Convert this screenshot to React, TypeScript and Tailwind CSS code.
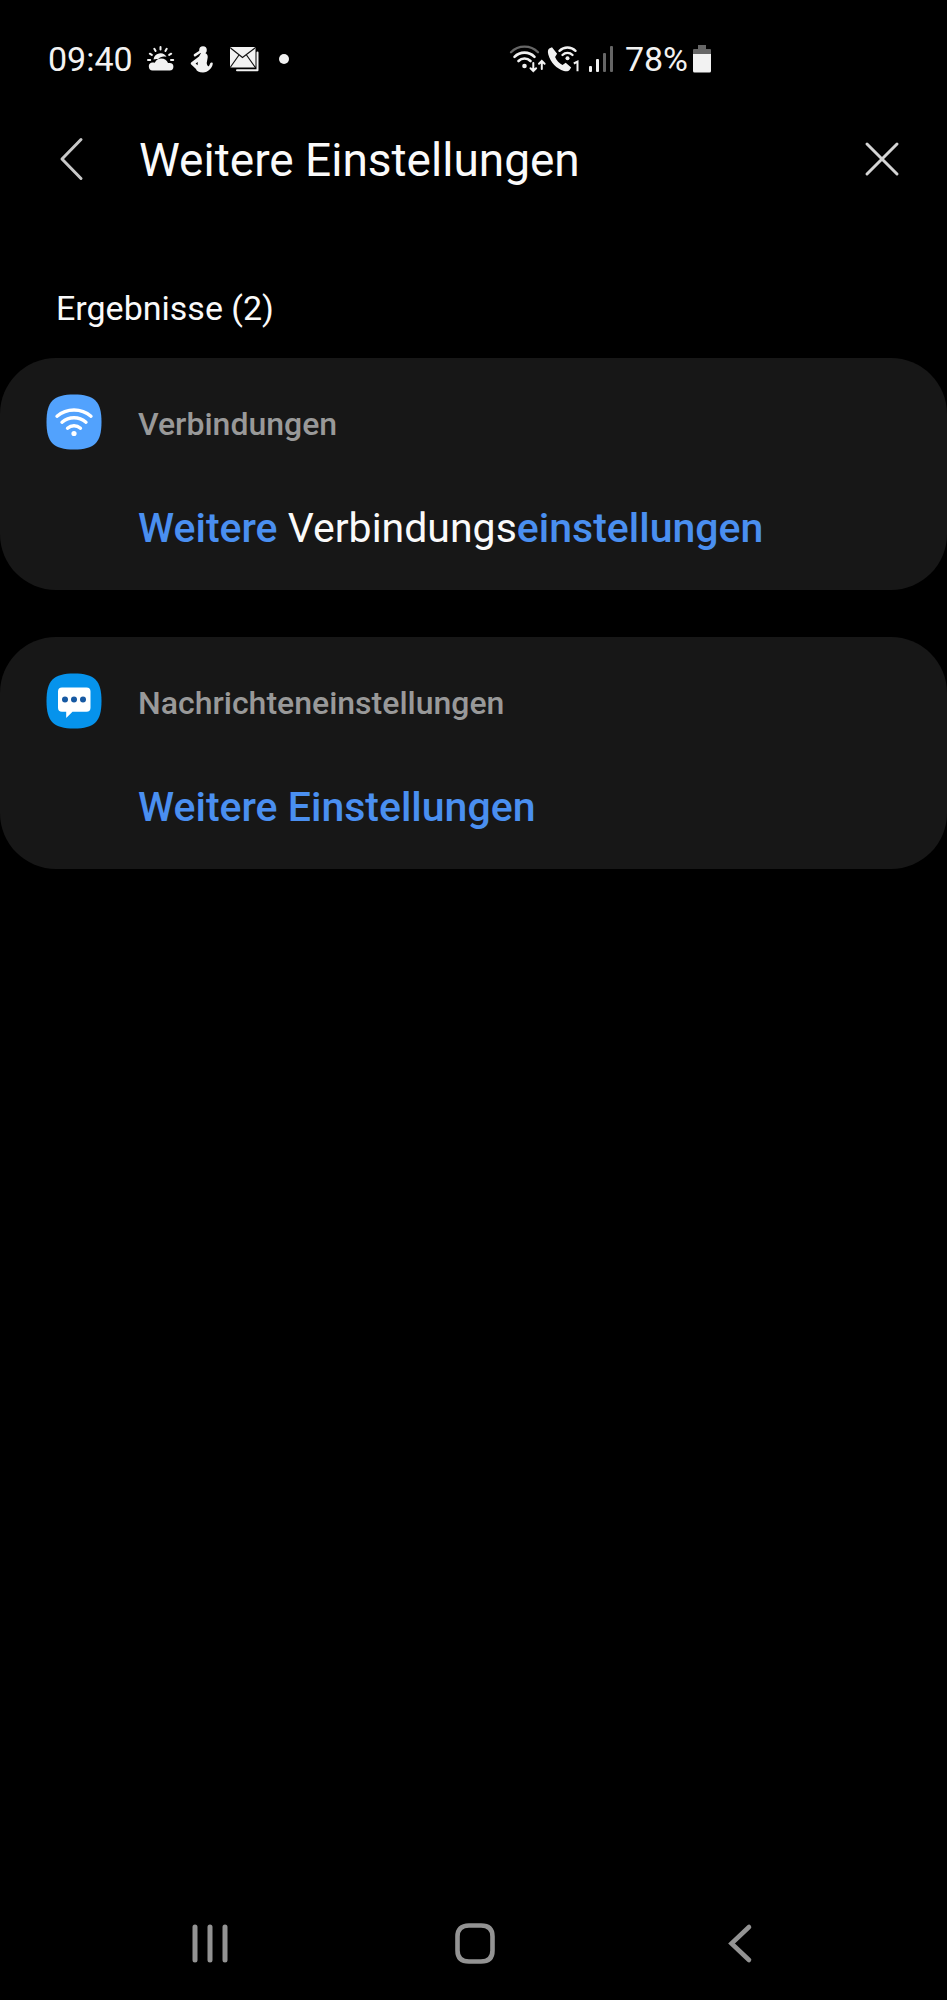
import { ReactNode, useState } from "react";

interface ResultCardProps {
    icon: ReactNode;
    category: string;
    children: ReactNode;
}

function WeatherIcon() {
    return (
        <svg width="28" height="28" viewBox="0 0 28 28" fill="none">
            <path d="M6.5 14.5a7 7 0 0 1 13-2.6c-3-1-6.300-.3-8.500 2.300-1.500-.3-3 0-4.500.3z" fill="#f2f2f2" />
            <path d="M5.500 25.500a4 4 0 0 1-.5-7.900c1-.2 2-.1 2.800.2 1.400-3 3.700-4.300 6.400-4.300 3.300 0 5.900 1.900 6.800 4.600h1.700a3.700 3.700 0 0 1 0 7.400z" fill="#f2f2f2" />
            <path d="M13.500 2v2.500M7.300 3.800l1.300 2.200M19.700 3.800l-1.300 2.200M2.800 8.700l2 1.200M24.200 8.700l-2 1.200M1 15h2.200M24 15h2.200" stroke="#f2f2f2" strokeWidth="2" strokeLinecap="round" />
        </svg>
    );
}

function FitnessIcon() {
    return (
        <svg width="26" height="28" viewBox="0 0 26 28" fill="none">
            <circle cx="14" cy="5" r="3.800" fill="#f2f2f2" />
            <path d="M11.500 6.500 6 10.200" stroke="#f2f2f2" strokeWidth="2.600" strokeLinecap="round" />
            <path d="M12 8h4.200c1.800.8 2.800 2.500 2.500 4.500l-1 5.500c.2 2 1.200 3.600 2.200 3.200l1.500-3.200c.6-1 2.600-.6 2.400.6-.4 4.400-4.700 8.900-9.800 8.900-4 0-6.500-1.500-7-3.500l-4.800-4.500c-.7-.8-.6-1.600.2-2.300L10 11.500zM8.800 17l-2.200 1.600 2 1.600z" fill="#f2f2f2" fillRule="evenodd" />
        </svg>
    );
}

function MailIcon() {
    return (
        <svg width="32" height="28" viewBox="0 0 32 28" fill="none">
            <path d="M28.500 7.500v17.800H8" stroke="#f2f2f2" strokeWidth="2" strokeLinecap="round" strokeLinejoin="round" />
            <rect x="1" y="2" width="25.500" height="20.500" rx="1.500" fill="#f2f2f2" />
            <path d="m1.500 3 12 9.500L26 3M1.500 22l8.500-12M26 22l-8.500-12" stroke="#111" strokeWidth="1.200" />
        </svg>
    );
}

function WifiStatusIcon() {
    return (
        <svg width="38" height="30" viewBox="0 0 38 30" fill="none" strokeLinecap="round">
            <path d="M2 8.200a19 19 0 0 1 27 0" stroke="#666" strokeWidth="2.300" />
            <path d="M5.500 12.800a14 14 0 0 1 20 0M9.500 17a8.500 8.500 0 0 1 12 0" stroke="#f2f2f2" strokeWidth="2.600" />
            <circle cx="15.500" cy="22" r="2.300" fill="#f2f2f2" />
            <path d="M24.300 19v8m-2.800-2.800 2.800 2.800 2.800-2.800M32.800 25v-8M30 19.800l2.800-2.800 2.800 2.800" stroke="#f2f2f2" strokeWidth="2" />
        </svg>
    );
}

function WifiCallIcon() {
    return (
        <svg width="34" height="30" viewBox="0 0 34 30" fill="none" strokeLinecap="round">
            <path d="M5 3.200 2.200 4.600C.8 5.600.6 8 1.300 10.500 3.700 18.500 9.500 24.700 17 27c2.300.7 4.600.3 5.700-1.200l1.500-2.300-5.500-4.800-3.200 2.200c-3.300-1.500-6-4.500-7.400-8l2-3.200z" fill="#f2f2f2" />
            <path d="M12.500 6.800a11.500 11.500 0 0 1 16 0M15.500 11a7 7 0 0 1 10 0" stroke="#f2f2f2" strokeWidth="2.400" />
            <circle cx="20.500" cy="14.200" r="2" fill="#f2f2f2" />
            <path d="m26.800 19.500 3.700-1.800v9.600" stroke="#f2f2f2" strokeWidth="2" strokeLinecap="butt" />
        </svg>
    );
}

function SignalIcon() {
    return (
        <svg width="26" height="30" viewBox="0 0 26 30">
            <rect x="0" y="22" width="3" height="6" rx="1" fill="#f2f2f2" />
            <rect x="7" y="15" width="3" height="13" rx="1" fill="#f2f2f2" />
            <rect x="14" y="9" width="3" height="19" rx="1" fill="#666" />
            <rect x="21" y="2" width="3" height="26" rx="1" fill="#666" />
        </svg>
    );
}

function BatteryIcon() {
    return (
        <svg width="20" height="30" viewBox="0 0 20 30">
            <path d="M6 1h8v4h4a1 1 0 0 1 1 1v4H1V6a1 1 0 0 1 1-1h4z" fill="#666" />
            <path d="M1 10h18v17a1.500 1.500 0 0 1-1.500 1.500h-15A1.500 1.500 0 0 1 1 27z" fill="#f2f2f2" />
        </svg>
    );
}

function ConnectionsIcon() {
    return (
        <svg width="56" height="56" viewBox="0 0 56 56" fill="none" strokeLinecap="round">
            <path d="M28 .5C48.500.5 55.500 7.500 55.500 28S48.500 55.500 28 55.500.5 48.500.5 28 7.500.5 28 .5z" fill="#52a2fd" />
            <path d="M11 22.200c9.800-8.300 24.200-8.300 34 0M16 28.200c7-6 17-6 24 0M21.500 34.200c3.800-3.300 9.200-3.300 13 0" stroke="#fff" strokeWidth="3.400" />
            <circle cx="28" cy="39.500" r="2.600" fill="#fff" />
        </svg>
    );
}

function MessagesIcon() {
    return (
        <svg width="56" height="56" viewBox="0 0 56 56">
            <path d="M28 .5C48.500.5 55.500 7.500 55.500 28S48.500 55.500 28 55.500.5 48.500.5 28 7.500.5 28 .5z" fill="#0693ec" />
            <path d="M16 14.500h24.500a4 4 0 0 1 4 4v16.300a4 4 0 0 1-4 4H26.500l-6.300 6.200v-6.200H16a4 4 0 0 1-4-4V18.500a4 4 0 0 1 4-4z" fill="#fff" />
            <g fill="#1659a3">
                <circle cx="19" cy="26.500" r="3" />
                <circle cx="28" cy="26.500" r="3" />
                <circle cx="37" cy="26.500" r="3" />
            </g>
        </svg>
    );
}

function StatusBar() {
    return (
        <div className="flex h-[118px] items-center justify-between pl-12 pr-[235px] text-[34px] leading-10 text-[#f2f2f2]">
            <div className="flex items-center">
                <span>09:40</span>
                <div className="ml-3.5 flex items-center gap-3.5">
                    <WeatherIcon />
                    <FitnessIcon />
                    <MailIcon />
                    <span className="ml-1 size-2.5 rounded-full bg-[#f2f2f2]" />
                </div>
            </div>
            <div className="flex items-center">
                <WifiStatusIcon />
                <WifiCallIcon />
                <span className="ml-2"><SignalIcon /></span>
                <span className="ml-2.5 mr-1">78%</span>
                <BatteryIcon />
            </div>
        </div>
    );
}

function SearchHeader() {
    const [query, setQuery] = useState("Weitere Einstellungen");

    return (
        <header className="flex h-[82px] items-center pl-12 pr-[41px]">
            <button aria-label="Zurück" className="flex size-12 shrink-0 items-center justify-center">
                <svg width="26" height="48" viewBox="0 0 26 48" fill="none">
                    <path d="M22 4.500 3 24 22 43.500" stroke="#c8c8c8" strokeWidth="3" strokeLinecap="round" strokeLinejoin="round" />
                </svg>
            </button>
            <input
                type="text"
                aria-label="Einstellungen durchsuchen"
                value={query}
                onChange={(e) => setQuery(e.target.value)}
                className="ml-[43px] h-16 min-w-0 flex-1 bg-transparent pt-0.5 text-[46px] text-[#fafafa] outline-none"
            />
            <button aria-label="Suche löschen" onClick={() => setQuery("")} className="flex size-12 shrink-0 items-center justify-center">
                <svg width="36" height="36" viewBox="0 0 36 36" fill="none">
                    <path d="m3 3 30 30M33 3 3 33" stroke="#d4d4d4" strokeWidth="3" strokeLinecap="round" />
                </svg>
            </button>
        </header>
    );
}

function ResultCard({ icon, category, children }: ResultCardProps) {
    return (
        <section className="rounded-[56px] bg-[#171717] px-[46px] pb-[30px] pt-9">
            <div className="flex h-14 items-center gap-9">
                {icon}
                <h2 className="pt-1 text-[32px] font-medium leading-10 text-[#999]">{category}</h2>
            </div>
            <a href="#" className="ml-[92px] mt-[46px] block text-[41px] leading-[64px] text-[#fafafa]">
                {children}
            </a>
        </section>
    );
}

function NavigationBar() {
    return (
        <nav className="mt-auto grid h-28 grid-cols-3 place-items-center pl-[77px] pr-[75px]">
            <button aria-label="Letzte Apps">
                <svg width="48" height="48" viewBox="0 0 48 48" stroke="#939393" strokeWidth="5" strokeLinecap="round">
                    <path d="M9 7v33M24 7v33M39 7v33" />
                </svg>
            </button>
            <button aria-label="Startseite">
                <svg width="48" height="48" viewBox="0 0 48 48" fill="none">
                    <path d="M18 5.500h12c8 0 11.500 4 11.500 11v14c0 7-3.500 11-11.500 11H18c-8 0-11.500-4-11.500-11v-14c0-7 3.500-11 11.500-11z" stroke="#939393" strokeWidth="4.600" />
                </svg>
            </button>
            <button aria-label="Zurück">
                <svg width="48" height="48" viewBox="0 0 48 48" fill="none">
                    <path d="M33 7 15.500 23.500 33 40" stroke="#939393" strokeWidth="4.600" strokeLinecap="round" />
                </svg>
            </button>
        </nav>
    );
}

export default function App() {
    return (
        <div className="flex min-h-screen flex-col bg-black font-['Roboto',sans-serif]">
            <StatusBar />
            <SearchHeader />
            <main>
                <h1 className="px-14 pb-[26px] pt-[84px] text-[34px] leading-[48px] text-[#fafafa]">Ergebnisse (2)</h1>
                <div className="flex flex-col gap-[47px]">
                    <ResultCard icon={<ConnectionsIcon />} category="Verbindungen">
                        <span className="font-medium text-[#4a8ff0]">Weitere</span> Verbindungs
                        <span className="font-medium text-[#4a8ff0]">einstellungen</span>
                    </ResultCard>
                    <ResultCard icon={<MessagesIcon />} category="Nachrichteneinstellungen">
                        <span className="font-medium text-[#4a8ff0]">Weitere Einstellungen</span>
                    </ResultCard>
                </div>
            </main>
            <NavigationBar />
        </div>
    );
}
